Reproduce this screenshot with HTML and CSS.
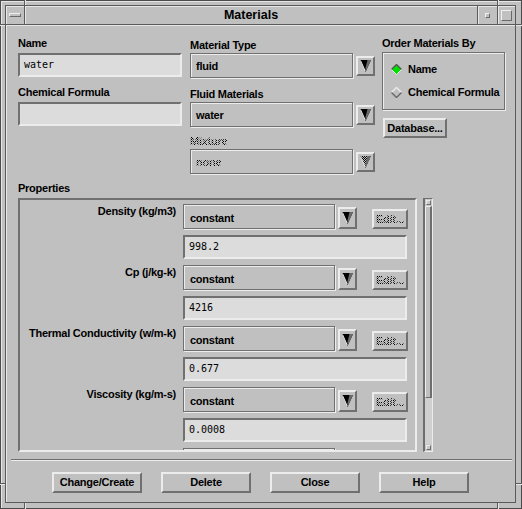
FILE: index.html
```html
<!DOCTYPE html>
<html lang="en">

<head>
    <meta charset="UTF-8">
    <meta name="viewport" content="width=device-width, initial-scale=1.0">
    <title>Materials</title>
    <link rel="stylesheet" href="styles.css">
</head>

<body>
    <svg class="defs" width="0" height="0">
        <defs>
            <pattern id="dots" width="2" height="2" patternUnits="userSpaceOnUse">
                <rect x="0" y="0" width="1" height="1" fill="#000" />
                <rect x="1" y="1" width="1" height="1" fill="#000" />
            </pattern>
            <symbol id="tri" viewBox="0 0 11 12">
                <polygon points="0,0 11,0 5.5,12" fill="#000" />
                <polygon points="7.5,0 11,0 5.5,12 5.5,8" fill="#6a6a6a" />
                <line x1="0.5" y1="0.5" x2="5.2" y2="11" stroke="#ececec" stroke-width="1" />
            </symbol>
            <symbol id="tri-off" viewBox="0 0 11 12">
                <polygon points="0,0 11,0 5.5,12" fill="url(#dots)" />
                <polygon points="7.5,0 11,0 5.5,12 5.5,8" fill="#6a6a6a" />
                <line x1="0.5" y1="0.5" x2="5.2" y2="11" stroke="#ececec" stroke-width="1" />
            </symbol>
        </defs>
    </svg>

    <div class="window">
        <!-- frame corner marks -->
        <span class="mark mark-v mark-tl"></span>
        <span class="mark mark-v mark-tr"></span>
        <span class="mark mark-v mark-bl"></span>
        <span class="mark mark-v mark-br"></span>
        <span class="mark mark-h mark-lt"></span>
        <span class="mark mark-h mark-rt"></span>
        <span class="mark mark-h mark-lb"></span>
        <span class="mark mark-h mark-rb"></span>

        <div class="frame">
            <div class="titlebar">
                <div class="tb-cell tb-menu"><span class="menu-bar"></span></div>
                <div class="tb-cell tb-title">Materials</div>
                <div class="tb-cell tb-min"><span class="min-box"></span></div>
                <div class="tb-cell tb-max"><span class="max-box"></span></div>
            </div>

            <div class="client">
                <div class="top">
                    <div class="col col-name">
                        <div class="label">Name</div>
                        <div class="text-field field-top">water</div>
                        <div class="label label-formula">Chemical Formula</div>
                        <div class="text-field field-top"></div>
                    </div>

                    <div class="col col-type">
                        <div class="label label-type">Material Type</div>
                        <div class="option-row">
                            <div class="option">fluid</div>
                            <div class="arrow-btn"><svg width="11" height="12"><use href="#tri" /></svg></div>
                        </div>
                        <div class="label label-fluid">Fluid Materials</div>
                        <div class="option-row">
                            <div class="option">water</div>
                            <div class="arrow-btn"><svg width="11" height="12"><use href="#tri" /></svg></div>
                        </div>
                        <div class="label label-mixture"><span class="stipple">Mixture</span></div>
                        <div class="option-row">
                            <div class="option"><span class="stipple">none</span></div>
                            <div class="arrow-btn"><svg width="11" height="12"><use href="#tri-off" /></svg></div>
                        </div>
                    </div>

                    <div class="col col-order">
                        <div class="label">Order Materials By</div>
                        <div class="group">
                            <div class="radio">
                                <svg width="11" height="11" viewBox="0 0 11 11">
                                    <polygon points="5.5,0.5 10.5,5.5 5.5,10.5 0.5,5.5" fill="#00e000" />
                                    <polyline points="0.5,5.5 5.5,0.5 10.5,5.5" fill="none" stroke="#555" stroke-width="1.4" />
                                    <polyline points="0.5,5.5 5.5,10.5 10.5,5.5" fill="none" stroke="#ececec" />
                                </svg>
                                Name
                            </div>
                            <div class="radio radio-second">
                                <svg width="11" height="11" viewBox="0 0 11 11">
                                    <polygon points="5.5,0.5 10.5,5.5 5.5,10.5 0.5,5.5" fill="#c0c0c0" />
                                    <polyline points="0.5,5.5 5.5,0.5 10.5,5.5" fill="none" stroke="#ececec" stroke-width="1.4" />
                                    <polyline points="0.5,5.5 5.5,10.5 10.5,5.5" fill="none" stroke="#666" stroke-width="1.4" />
                                </svg>
                                Chemical Formula
                            </div>
                        </div>
                        <div class="btn btn-db">Database...</div>
                    </div>
                </div>

                <div class="label props-label">Properties</div>

                <div class="props">
                    <div class="props-box">
                        <div class="prop">
                            <div class="prop-name">Density (kg/m3)</div>
                            <div class="prop-controls">
                                <div class="prop-row">
                                    <div class="option option-prop">constant</div>
                                    <div class="arrow-btn arrow-prop"><svg width="11" height="12"><use href="#tri" /></svg></div>
                                    <div class="btn btn-edit"><span class="stipple">Edit...</span></div>
                                </div>
                                <div class="text-field field-value">998.2</div>
                            </div>
                        </div>
                        <div class="prop">
                            <div class="prop-name">Cp (j/kg-k)</div>
                            <div class="prop-controls">
                                <div class="prop-row">
                                    <div class="option option-prop">constant</div>
                                    <div class="arrow-btn arrow-prop"><svg width="11" height="12"><use href="#tri" /></svg></div>
                                    <div class="btn btn-edit"><span class="stipple">Edit...</span></div>
                                </div>
                                <div class="text-field field-value">4216</div>
                            </div>
                        </div>
                        <div class="prop">
                            <div class="prop-name">Thermal Conductivity (w/m-k)</div>
                            <div class="prop-controls">
                                <div class="prop-row">
                                    <div class="option option-prop">constant</div>
                                    <div class="arrow-btn arrow-prop"><svg width="11" height="12"><use href="#tri" /></svg></div>
                                    <div class="btn btn-edit"><span class="stipple">Edit...</span></div>
                                </div>
                                <div class="text-field field-value">0.677</div>
                            </div>
                        </div>
                        <div class="prop">
                            <div class="prop-name">Viscosity (kg/m-s)</div>
                            <div class="prop-controls">
                                <div class="prop-row">
                                    <div class="option option-prop">constant</div>
                                    <div class="arrow-btn arrow-prop"><svg width="11" height="12"><use href="#tri" /></svg></div>
                                    <div class="btn btn-edit"><span class="stipple">Edit...</span></div>
                                </div>
                                <div class="text-field field-value">0.0008</div>
                            </div>
                        </div>
                        <!-- next row, scrolled out of view -->
                        <div class="prop">
                            <div class="prop-name"></div>
                            <div class="prop-controls">
                                <div class="prop-row">
                                    <div class="option option-prop"></div>
                                </div>
                            </div>
                        </div>
                    </div>

                    <div class="scrollbar">
                        <div class="sb-arrow"><span></span></div>
                        <div class="sb-thumb"></div>
                        <div class="sb-track"></div>
                        <div class="sb-arrow"><span></span></div>
                    </div>
                </div>

                <div class="separator"></div>

                <div class="actions">
                    <div class="btn btn-action">Change/Create</div>
                    <div class="btn btn-action">Delete</div>
                    <div class="btn btn-action">Close</div>
                    <div class="btn btn-action">Help</div>
                </div>
            </div>
        </div>
    </div>
</body>
</html>
```

FILE: styles.css
```css
* {
    box-sizing: border-box;
}

body {
    margin: 0;
    background: #c0c0c0;
    font-family: "Liberation Sans", Arial, sans-serif;
    font-size: 11px;
    font-weight: bold;
    letter-spacing: -0.25px;
    color: #000;
}

.defs {
    position: absolute;
}

/* window frame */
.window {
    position: relative;
    width: 522px;
    height: 509px;
    padding: 4px 5px 5px 4px;
    border: 1px solid #4a4a4a;
    box-shadow: inset 1px 1px 0 #e6e6e6;
    background: #c0c0c0;
}

.mark {
    position: absolute;
    background: #5a5a5a;
}

.mark-v {
    width: 1px;
    height: 5px;
    box-shadow: 1px 0 0 #e6e6e6;
}

.mark-h {
    width: 5px;
    height: 1px;
    box-shadow: 0 1px 0 #e6e6e6;
}

.mark-tl { left: 23px; top: -1px; }
.mark-tr { left: 496px; top: -1px; }
.mark-bl { left: 23px; bottom: -1px; height: 6px; }
.mark-br { left: 496px; bottom: -1px; height: 6px; }
.mark-lt { top: 23px; left: -1px; }
.mark-rt { top: 23px; right: -1px; width: 6px; }
.mark-lb { top: 482px; left: -1px; }
.mark-rb { top: 482px; right: -1px; width: 6px; }

.frame {
    height: 100%;
    border: 1px solid #5a5a5a;
    display: flex;
    flex-direction: column;
}

.titlebar {
    display: flex;
    height: 19px;
    border-bottom: 1px solid #5a5a5a;
}

.tb-cell {
    display: flex;
    align-items: center;
    justify-content: center;
    box-shadow: inset 1px 1px 0 #e6e6e6;
}

.tb-menu {
    width: 19px;
    border-right: 1px solid #5a5a5a;
}

.tb-title {
    flex: 1;
    border-right: 1px solid #5a5a5a;
    font-size: 12.5px;
    letter-spacing: 0;
    line-height: 18px;
}

.tb-min {
    width: 20px;
    border-right: 1px solid #5a5a5a;
}

.tb-max {
    width: 17px;
}

.menu-bar {
    width: 12px;
    height: 4px;
    border: 1px solid;
    border-color: #f0f0f0 #6a6a6a #6a6a6a #f0f0f0;
}

.min-box {
    width: 5px;
    height: 5px;
    border: 1px solid;
    border-color: #f0f0f0 #6a6a6a #6a6a6a #f0f0f0;
}

.max-box {
    width: 11px;
    height: 11px;
    border: 1px solid;
    border-color: #f0f0f0 #6a6a6a #6a6a6a #f0f0f0;
}

.client {
    flex: 1;
    box-shadow: inset 1px 1px 0 #e6e6e6;
}

/* common widgets */
.label {
    line-height: 14px;
    white-space: nowrap;
}

.stipple {
    background: repeating-conic-gradient(#000 0 25%, transparent 0 50%) 0 0 / 2px 2px;
    -webkit-background-clip: text;
    background-clip: text;
    color: transparent;
}

.text-field {
    height: 24px;
    border: 2px solid;
    border-color: #707070 #ececec #ececec #707070;
    background: #dcdcdc;
    padding-left: 4px;
    font-family: "DejaVu Sans Mono", "Liberation Mono", monospace;
    font-weight: normal;
    font-size: 10px;
    letter-spacing: 0;
    line-height: 20px;
}

.option {
    width: 163px;
    height: 25px;
    border: 1px solid #707070;
    box-shadow: inset 1px 1px 0 #ececec, 1px 1px 0 #ececec;
    padding: 2px 0 0 5px;
    line-height: 20px;
}

.option-row {
    display: flex;
    align-items: center;
    margin-top: 1px;
}

.arrow-btn {
    width: 19px;
    height: 20px;
    margin-left: 3px;
    border: 2px solid;
    border-color: #ececec #707070 #707070 #ececec;
    display: flex;
    align-items: center;
    justify-content: center;
}

.arrow-btn svg {
    display: block;
}

.btn {
    border: 2px solid;
    border-color: #ececec #707070 #707070 #ececec;
    text-align: center;
    white-space: nowrap;
}

/* top section */
.top {
    display: flex;
    padding: 11px 0 0 12px;
}

.col-name {
    width: 164px;
}

.field-top {
    margin-top: 3px;
}

.label-formula {
    margin-top: 8px;
}

.col-type {
    width: 186px;
    margin-left: 8px;
}

.label-type {
    margin-top: 2px;
}

.label-fluid {
    margin-top: 9px;
}

.label-mixture {
    margin-top: 7px;
}

.col-order {
    width: 123px;
    margin-left: 6px;
}

.group {
    margin-top: 2px;
    height: 58px;
    border: 1px solid #707070;
    box-shadow: inset 1px 1px 0 #ececec, 1px 1px 0 #ececec;
    padding: 8px 0 0 8px;
}

.radio {
    display: flex;
    align-items: center;
    gap: 6px;
    height: 16px;
}

.radio-second {
    margin-top: 7px;
}

.btn-db {
    width: 64px;
    height: 20px;
    margin: 8px 0 0 1px;
    line-height: 16px;
}

/* properties */
.props-label {
    margin: 7px 0 0 12px;
}

.props {
    display: flex;
    margin: 3px 0 0 12px;
}

.props-box {
    width: 399px;
    height: 254px;
    border: 2px solid;
    border-color: #707070 #ececec #ececec #707070;
    padding-top: 4px;
    overflow: hidden;
}

.prop {
    display: flex;
    height: 61px;
}

.prop-name {
    width: 156px;
    text-align: right;
    margin-top: 0;
    line-height: 14px;
    white-space: nowrap;
}

.prop-controls {
    margin-left: 7px;
}

.prop-row {
    display: flex;
    align-items: flex-end;
}

.option-prop {
    width: 152px;
    padding: 3px 0 0 6px;
}

.arrow-prop {
    height: 22px;
}

.btn-edit {
    width: 36px;
    height: 20px;
    margin-left: 15px;
    line-height: 16px;
}

.field-value {
    width: 224px;
    margin-top: 6px;
}

.scrollbar {
    width: 10px;
    height: 254px;
    margin-left: 6px;
    border-left: 2px solid #6e6e6e;
    border-top: 1px solid #6e6e6e;
    border-right: 1px solid #ececec;
    border-bottom: 1px solid #ececec;
    background: #c8c8c8;
    display: flex;
    flex-direction: column;
}

.sb-arrow {
    height: 7px;
    display: flex;
    align-items: center;
    justify-content: center;
}

.sb-arrow span {
    width: 5px;
    height: 5px;
    border: 1px solid;
    border-color: #ececec #6e6e6e #6e6e6e #ececec;
}

.sb-thumb {
    height: 192px;
    border-left: 1px solid #ececec;
    border-top: 1px solid #ececec;
    border-right: 2px solid #6e6e6e;
    border-bottom: 1px solid #6e6e6e;
    background: #c0c0c0;
}

.sb-track {
    flex: 1;
    background: #d0d0d0;
}

/* bottom buttons */
.separator {
    height: 2px;
    margin: 7px 3px 0 5px;
    border-top: 1px solid #6e6e6e;
    border-bottom: 1px solid #ececec;
}

.actions {
    display: flex;
    justify-content: center;
    gap: 19px;
    margin-top: 11px;
}

.btn-action {
    width: 90px;
    height: 21px;
    line-height: 17px;
}
```
